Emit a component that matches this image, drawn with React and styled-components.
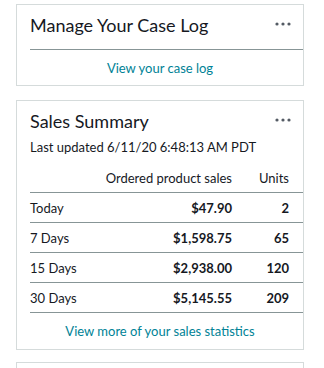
import React from "react";
import styled, { createGlobalStyle } from "styled-components";

const GlobalStyle = createGlobalStyle`
  body {
    margin: 0;
    background: #ffffff;
    font-family: "Lato", "Liberation Sans", Arial, sans-serif;
    color: #16191f;
  }
`;

const rows = [
  { label: "Today", sales: "$47.90", units: "2" },
  { label: "7 Days", sales: "$1,598.75", units: "65" },
  { label: "15 Days", sales: "$2,938.00", units: "120" },
  { label: "30 Days", sales: "$5,145.55", units: "209" },
];

const Page = styled.div`
  display: flex;
  flex-direction: column;
  padding: 4px 0 0 16px;
  width: 288px;
`;

const Card = styled.div`
  border: 1px solid #d5dbdb;
  background: #fff;
  padding-left: 13px;
  height: ${(p) => p.$height}px;
  margin-bottom: ${(p) => p.$mb || 0}px;
  box-sizing: border-box;
  flex-shrink: 0;
`;

const Header = styled.div`
  display: flex;
  align-items: flex-start;
  justify-content: space-between;
  padding: 8px 12px 0 0;
  border-bottom: ${(p) => (p.$ruled ? "1px solid #879596" : "none")};
  padding-bottom: ${(p) => (p.$ruled ? "12px" : "7px")};
`;

const Title = styled.h2`
  margin: 0;
  font-size: 18px;
  line-height: 24px;
  font-weight: 400;
  color: #16191f;
`;

const Sub = styled.div`
  font-size: 13px;
  line-height: 18px;
  color: #16191f;
  margin-top: 5px;
`;

const Dots = () => (
  <svg width="16" height="4" viewBox="0 0 16 4" style={{ marginTop: 9 }}>
    <circle cx="2" cy="2" r="1.6" fill="#545b64" />
    <circle cx="8" cy="2" r="1.6" fill="#545b64" />
    <circle cx="14" cy="2" r="1.6" fill="#545b64" />
  </svg>
);

const LinkRow = styled.div`
  height: 35px;
  display: flex;
  align-items: center;
  justify-content: center;
  padding-right: 13px;
`;

const Link = styled.a`
  color: #008296;
  font-size: 13px;
  text-decoration: none;
`;

const Table = styled.div`
  display: flex;
  flex-direction: column;
`;

const Row = styled.div`
  display: grid;
  grid-template-columns: 1fr auto 57px;
  align-items: center;
  height: 30px;
  box-sizing: border-box;
  border-bottom: 1px solid #879596;
  font-size: 13px;
  padding-right: 14px;
  white-space: nowrap;
`;

const Cell = styled.div`
  text-align: ${(p) => (p.$right ? "right" : "left")};
  font-weight: ${(p) => (p.$bold ? 700 : 400)};
  color: #16191f;
`;

export default function App() {
  return (
    <>
      <GlobalStyle />
      <Page>
        <Card $height={82} $mb={14}>
          <Header $ruled>
            <Title>Manage Your Case Log</Title>
            <Dots />
          </Header>
          <LinkRow>
            <Link href="#">View your case log</Link>
          </LinkRow>
        </Card>

        <Card $height={250} $mb={12}>
          <Header>
            <div>
              <Title>Sales Summary</Title>
              <Sub>Last updated 6/11/20 6:48:13 AM PDT</Sub>
            </div>
            <Dots />
          </Header>
          <Table>
            <Row>
              <Cell />
              <Cell $right>Ordered product sales</Cell>
              <Cell $right>Units</Cell>
            </Row>
            {rows.map((r) => (
              <Row key={r.label}>
                <Cell>{r.label}</Cell>
                <Cell $right $bold>{r.sales}</Cell>
                <Cell $right $bold>{r.units}</Cell>
              </Row>
            ))}
          </Table>
          <LinkRow>
            <Link href="#">View more of your sales statistics</Link>
          </LinkRow>
        </Card>

        <Card $height={40} />
      </Page>
    </>
  );
}
